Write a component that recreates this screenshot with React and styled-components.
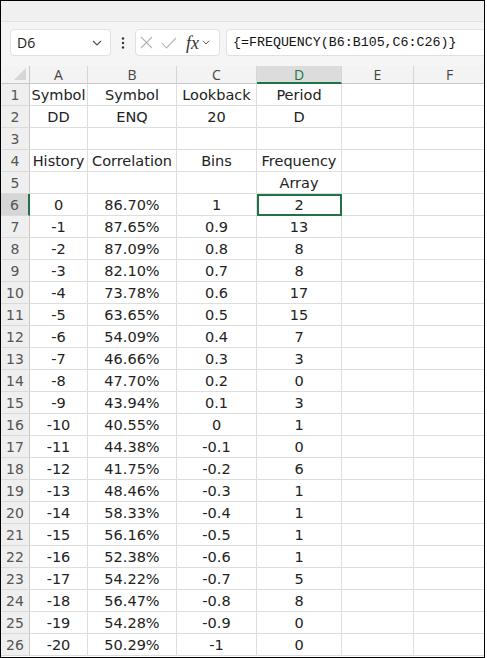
import React from 'react';
import styled, { createGlobalStyle } from 'styled-components';

const GlobalStyle = createGlobalStyle`
  html, body { margin: 0; padding: 0; background: #fff; }
  * { box-sizing: border-box; }
`;

const COLS = [
  { key: 'A', width: 58 },
  { key: 'B', width: 89 },
  { key: 'C', width: 80 },
  { key: 'D', width: 85 },
  { key: 'E', width: 72 },
  { key: 'F', width: 72 },
];

const ROWS = [
  ['Symbol', 'Symbol', 'Lookback', 'Period'],
  ['DD', 'ENQ', '20', 'D'],
  ['', '', '', ''],
  ['History', 'Correlation', 'Bins', 'Frequency'],
  ['', '', '', 'Array'],
  ['0', '86.70%', '1', '2'],
  ['-1', '87.65%', '0.9', '13'],
  ['-2', '87.09%', '0.8', '8'],
  ['-3', '82.10%', '0.7', '8'],
  ['-4', '73.78%', '0.6', '17'],
  ['-5', '63.65%', '0.5', '15'],
  ['-6', '54.09%', '0.4', '7'],
  ['-7', '46.66%', '0.3', '3'],
  ['-8', '47.70%', '0.2', '0'],
  ['-9', '43.94%', '0.1', '3'],
  ['-10', '40.55%', '0', '1'],
  ['-11', '44.38%', '-0.1', '0'],
  ['-12', '41.75%', '-0.2', '6'],
  ['-13', '48.46%', '-0.3', '1'],
  ['-14', '58.33%', '-0.4', '1'],
  ['-15', '56.16%', '-0.5', '1'],
  ['-16', '52.38%', '-0.6', '1'],
  ['-17', '54.22%', '-0.7', '5'],
  ['-18', '56.47%', '-0.8', '8'],
  ['-19', '54.28%', '-0.9', '0'],
  ['-20', '50.29%', '-1', '0'],
];

const gridTemplate = `29px ${COLS.map((c) => c.width + 'px').join(' ')}`;

const Chevron = ({ size = 10 }) => (
  <svg width={size} height={size * 0.6} viewBox="0 0 10 6">
    <polyline points="1,1 5,5 9,1" fill="none" stroke="#555" strokeWidth="1.2" />
  </svg>
);

const App = () => {
  return (
    <>
      <GlobalStyle />
      <Frame>
        <TopStrip />
        <FormulaBar>
          <NameBox>
            <span>D6</span>
            <Chevron />
          </NameBox>
          <svg width="4" height="12" viewBox="0 0 4 12">
            <circle cx="2" cy="1.5" r="1.2" fill="#333" />
            <circle cx="2" cy="6" r="1.2" fill="#333" />
            <circle cx="2" cy="10.5" r="1.2" fill="#333" />
          </svg>
          <ActionBox>
            <svg width="13" height="13" viewBox="0 0 13 13">
              <path d="M1 1 L12 12 M12 1 L1 12" stroke="#b4b4b4" strokeWidth="1.1" fill="none" />
            </svg>
            <svg width="16" height="12" viewBox="0 0 16 12">
              <polyline points="1,6 5.5,11 15,1" stroke="#b4b4b4" strokeWidth="1.1" fill="none" />
            </svg>
            <Fx>fx</Fx>
            <Chevron size={8} />
          </ActionBox>
          <FormulaInput>{'{=FREQUENCY(B6:B105,C6:C26)}'}</FormulaInput>
        </FormulaBar>
        <Sheet>
          <Corner>
            <svg width="12" height="12" viewBox="0 0 12 12">
              <polygon points="12,0 12,12 0,12" fill="#d6d6d6" />
            </svg>
          </Corner>
          {COLS.map((c) => (
            <ColHead key={c.key} $active={c.key === 'D'}>
              {c.key}
            </ColHead>
          ))}
          {ROWS.map((row, i) => (
            <React.Fragment key={i}>
              <RowHead $active={i === 5}>{i + 1}</RowHead>
              {COLS.map((c, j) => (
                <Cell key={c.key} $selected={i === 5 && j === 3}>
                  {row[j] || ''}
                </Cell>
              ))}
            </React.Fragment>
          ))}
        </Sheet>
      </Frame>
    </>
  );
};

export default App;

const Frame = styled.div`
  width: 485px;
  height: 658px;
  border: 1px solid #000;
  overflow: hidden;
  display: flex;
  flex-direction: column;
  background: #fff;
`;

const TopStrip = styled.div`
  height: 21px;
  flex-shrink: 0;
  background: #f0f0f0;
  border-bottom: 1px solid #e2e2e2;
`;

const FormulaBar = styled.div`
  height: 44px;
  flex-shrink: 0;
  background: #f5f5f5;
  display: flex;
  align-items: center;
  padding: 0 0 3px 9px;

  & > svg {
    margin: 0 10px 0 10px;
  }
`;

const Box = styled.div`
  height: 27px;
  background: #fff;
  border: 1px solid #e1e1e1;
  border-radius: 4px;
  display: flex;
  align-items: center;
`;

const NameBox = styled(Box)`
  width: 101px;
  padding: 0 8px 0 6px;
  justify-content: space-between;
  font-family: 'Open Sans', 'Noto Sans', sans-serif;
  font-size: 14px;
  color: #222;
`;

const ActionBox = styled(Box)`
  width: 85px;
  padding: 0 4px 0 4px;
  gap: 8px;
`;

const Fx = styled.span`
  font-family: 'Liberation Serif', serif;
  font-style: italic;
  font-size: 18px;
  color: #333;
  margin-left: 1px;
  margin-right: -5px;
  line-height: 1;
`;

const FormulaInput = styled(Box)`
  flex: 1;
  margin-left: 6px;
  border-right: none;
  border-radius: 4px 0 0 4px;
  padding-left: 6px;
  font-family: 'Liberation Mono', monospace;
  font-size: 13.3px;
  color: #111;
`;

const Sheet = styled.div`
  display: grid;
  grid-template-columns: ${gridTemplate};
  grid-auto-rows: 22px;
  grid-template-rows: 18px;
`;

const HeadBase = styled.div`
  background: #f3f3f3;
  border-right: 1px solid #d6d6d6;
  border-bottom: 1px solid #c8c8c8;
  display: flex;
  align-items: center;
  justify-content: center;
`;

const Corner = styled(HeadBase)`
  align-items: flex-end;
  justify-content: flex-end;
  padding: 0 3px 3px 0;
  border-right: 1px solid #c8c8c8;
`;

const ColHead = styled(HeadBase)`
  font-family: 'Open Sans', 'Noto Sans', sans-serif;
  font-size: 14px;
  color: ${(p) => (p.$active ? '#217346' : '#444')};
  background: ${(p) => (p.$active ? '#dcdcdc' : '#f3f3f3')};
  border-bottom: ${(p) => (p.$active ? '2px solid #217346' : '1px solid #c8c8c8')};
`;

const RowHead = styled(HeadBase)`
  font-family: 'DejaVu Sans', sans-serif;
  font-size: 14px;
  color: #555;
  background: ${(p) => (p.$active ? '#d6d6d6' : '#efefef')};
  border-bottom: 1px solid #dadada;
  border-right: ${(p) => (p.$active ? '2px solid #217346' : '1px solid #c8c8c8')};
`;

const Cell = styled.div`
  border-right: 1px solid #dedede;
  border-bottom: 1px solid #dedede;
  display: flex;
  align-items: center;
  justify-content: center;
  font-family: 'DejaVu Sans', sans-serif;
  font-size: 14.5px;
  color: #222;
  white-space: nowrap;
  ${(p) =>
    p.$selected &&
    `
    outline: 2px solid #217346;
    outline-offset: -2px;
  `}
`;
